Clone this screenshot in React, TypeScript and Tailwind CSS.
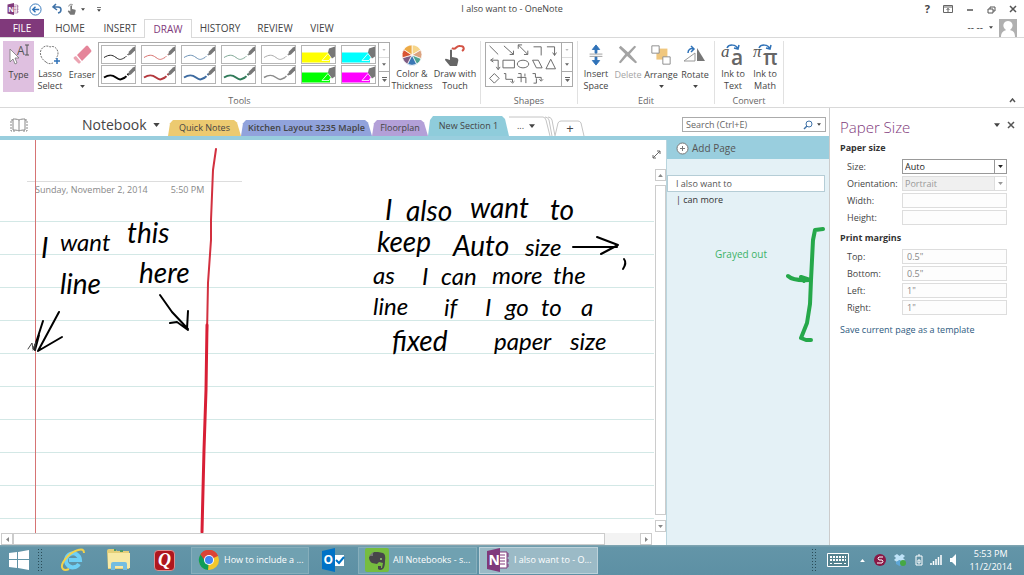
import type { ReactNode } from 'react';

interface RibbonButtonProps {
  icon: ReactNode;
  lines: string[];
  width: string;
  active?: boolean;
  disabled?: boolean;
  menu?: boolean;
}

const RibbonButton = ({ icon, lines, width, active, disabled, menu }: RibbonButtonProps) => (
  <button
    disabled={disabled}
    className={`flex h-[51px] shrink-0 flex-col items-center ${width} ${active ? 'bg-[#dfc0e0]' : ''} ${disabled ? 'text-[#a5a5a5]' : 'text-[#444]'}`}
  >
    <span className="flex h-7 items-center justify-center">{icon}</span>
    {lines.map((line) => (
      <span key={line} className="whitespace-nowrap leading-[12px]">{line}</span>
    ))}
    {menu && <Caret className="mt-1 h-[3px] w-[5px]" />}
  </button>
);

const Caret = ({ className }: { className: string }) => (
  <svg viewBox="0 0 8 5" className={`shrink-0 ${className}`} fill="currentColor">
    <path d="M0 0h8L4 5z" />
  </svg>
);

const RibbonGroup = ({ label, className, children }: { label: string; className: string; children: ReactNode }) => (
  <div className={`my-[3px] flex shrink-0 flex-col border-r border-[#e1e1e1] ${className}`}>
    <div className="flex h-[53px] shrink-0">{children}</div>
    <div className="flex-1 text-center leading-[14px] text-[#666]">{label}</div>
  </div>
);

const GalleryScroll = () => (
  <div className="flex w-[11px] shrink-0 flex-col border-l border-[#ababab] text-[#666]">
    <button aria-label="Scroll up" className="flex flex-1 items-center justify-center text-[#bbb]">
      <Caret className="h-[2px] w-[4px]" />
    </button>
    <button aria-label="Scroll down" className="flex flex-1 items-center justify-center border-t border-[#ddd]">
      <Caret className="h-[3px] w-[4px]" />
    </button>
    <button aria-label="More" className="flex flex-1 flex-col items-center justify-center gap-px border-t border-[#ababab]">
      <span className="h-px w-[5px] bg-[#666]" />
      <Caret className="h-[3px] w-[5px]" />
    </button>
  </div>
);

const PENS = [
  { name: 'Black', color: '#222', width: 1 },
  { name: 'Red', color: '#d8726f', width: 1 },
  { name: 'Blue', color: '#6d92b5', width: 1 },
  { name: 'Green', color: '#7fa795', width: 1 },
  { name: 'Gray', color: '#aaa', width: 1 },
  { name: 'Yellow highlighter', color: '#ffff00', width: 0 },
  { name: 'Cyan highlighter', color: '#00ffff', width: 0 },
  { name: 'Thick black', color: '#000', width: 2 },
  { name: 'Thick red', color: '#b3373c', width: 2 },
  { name: 'Thick blue', color: '#3c6aa0', width: 2 },
  { name: 'Thick green', color: '#2f7a58', width: 2 },
  { name: 'Thick gray', color: '#8a8a8a', width: 1.5 },
  { name: 'Green highlighter', color: '#00ff00', width: 0 },
  { name: 'Magenta highlighter', color: '#ff00ff', width: 0 },
];

const PenPreview = ({ color, width }: { color: string; width: number }) => (
  <svg viewBox="0 0 33 16" className="h-full w-full">
    {width > 0 ? (
      <>
        <path d="M2 11C7 8 10 8 14 11S19 13 23 11" fill="none" stroke={color} strokeWidth={width} />
        <path d="M23 11L28 6" stroke={color} strokeWidth={width} strokeDasharray="2 1.500" />
        <path d="M26 9l1-4 4-4 2-1v4l-4 4z" fill="#777" />
      </>
    ) : (
      <>
        <path d="M0 6h28v10H0z" fill={color} />
        <path d="M20 14l6-7 3 4-2 3z" fill={color} stroke="#fff" strokeWidth=".8" />
        <path d="M26 6l1-4 6-2v10l-3 2z" fill="#777" />
      </>
    )}
  </svg>
);

const ShapesPreview = () => (
  <svg viewBox="0 0 77 45" className="h-[43px] w-[76px]" fill="none" stroke="#666" strokeWidth="1">
    <path d="M3 3l9 9M18 3l10 9m0-4v4h-4M33 2l10 10m-10-6V2h4m2 10h4V8M49 4h8v9M63 4h8v9m-2-3l2 3 2-3" />
    <path d="M5 18h7v9m-2-2l2 3 2-3M7 16l-3 2 3 2M17 18h12v8H17zM48 18h6l4 8h-6zM67 17l5 10H62z" />
    <ellipse cx="38" cy="22" rx="6" ry="4" />
    <path d="M8 32l5 5-5 5-5-5zM18 32h2v6h7v3m-2-1l2 2 2-2M33 32h3v9m-4-5h9v6m-1-10v3M48 32h3v4h6v3m-8 3h3v-5m3 1l2 2 2-2" />
  </svg>
);

const TypeIcon = () => (
  <svg viewBox="0 0 22 24" className="h-6 w-[22px]">
    <text x="9" y="12" fontSize="12" fill="#555">A</text>
    <path d="M17 2h4M17 12h4M19 2v10" stroke="#555" fill="none" />
    <path d="M2 6v13l3-3 2 5 2-1-2-5h4z" fill="#fff" stroke="#777" strokeWidth=".8" />
  </svg>
);

const LassoIcon = () => (
  <svg viewBox="0 0 24 24" className="h-6 w-6" fill="none">
    <path d="M8 19C4 17 1 11 3 7s6-5 9-3c4-2 8 2 8 6s-2 4-2 6" stroke="#777" strokeDasharray="2 1" />
    <path d="M8 19c2 2 4 2 7 1" stroke="#777" strokeDasharray="2 1" />
    <path d="M19 15v6M16 18h6" stroke="#2f72b8" strokeWidth="1.500" />
  </svg>
);

const EraserIcon = () => (
  <svg viewBox="0 0 24 24" className="h-6 w-6">
    <path d="M7 12L16 3q1-1 2 0l3 4q1 1 0 2l-9 9z" fill="#e5859a" />
    <path d="M6 13l5 6-1 1q-1 1-2 0l-4-4q-1-1 0-2z" fill="#eba4b2" />
  </svg>
);

const ColorWheel = () => (
  <svg viewBox="-12 -12 24 24" className="h-[22px] w-[22px]" stroke="#fff" strokeWidth=".8">
    <path d="M0 0V-11A11 11 0 0 1 9.500-5.500z" fill="#f6d58a" />
    <path d="M0 0L9.500-5.500A11 11 0 0 1 10 4z" fill="#dba27e" />
    <path d="M0 0L10 4A11 11 0 0 1 5 10z" fill="#4fa391" />
    <path d="M0 0L5 10A11 11 0 0 1-5 10z" fill="#3b78b5" />
    <path d="M0 0L-5 10A11 11 0 0 1-10.500 3z" fill="#7e5c83" />
    <path d="M0 0L-10.500 3A11 11 0 0 1-9-6z" fill="#d95433" />
    <path d="M0 0L-9-6A11 11 0 0 1 0-11z" fill="#edaa45" />
  </svg>
);

const TouchIcon = () => (
  <svg viewBox="0 0 24 24" className="h-6 w-6">
    <path d="M9 5c4 3 4-3 8-2 4 0 5 3 2 5" fill="none" stroke="#d35244" strokeWidth="2" />
    <path d="M7 7q1.500-1 2 0v7l5 1q2 1 1 4l-1 4H7l-5-6q0-2 2-1l3 1z" fill="#666" />
  </svg>
);

const InsertSpaceIcon = () => (
  <svg viewBox="0 0 20 24" className="h-[22px] w-5">
    <path d="M10 1l4 5h-3v4H9V6H6zM10 23l4-5h-3v-4H9v4H6z" fill="#2f72b8" stroke="#2f72b8" />
    <path d="M3 11h14M3 13.500h14" stroke="#999" />
  </svg>
);

const DeleteIcon = () => (
  <svg viewBox="0 0 24 24" className="h-[22px] w-6">
    <path d="M2 4l2-2 8 7 7-7 2 1-7 8 8 9-2 1-9-8-7 8-2-1 7-9z" fill="#a3a3a3" />
  </svg>
);

const ArrangeIcon = () => (
  <svg viewBox="0 0 24 24" className="h-[22px] w-[22px]" fill="#fff" stroke="#888">
    <path d="M7 5h12v12H7z" fill="#f0c77e" stroke="none" />
    <path d="M2 2h8v8H2zM14 14h8v8h-8z" />
  </svg>
);

const RotateIcon = () => (
  <svg viewBox="0 0 24 24" className="h-6 w-6">
    <path d="M14 5v13h8z" fill="#777" />
    <path d="M12 10v8H1z" fill="#fff" stroke="#999" />
    <path d="M5 10c0-4 3-5 6-4M8 3l3 3-3 3" fill="none" stroke="#2f72b8" strokeWidth="1.500" />
  </svg>
);

const ConvertIcon = ({ glyph }: { glyph: string }) => (
  <svg viewBox="0 0 26 26" className="h-[26px] w-[26px]">
    <path d="M7 6c2-4 9-4 11 1m1-4l-1 4-4-1" fill="none" stroke="#2f72b8" strokeWidth="1.500" />
    <text x="1" y="15" fontSize="17" fontStyle="italic" fontFamily="Liberation Serif" fill="#555">{glyph}</text>
    <text x="11" y="23" fontSize="21" fontWeight="600" fill="#666">{glyph}</text>
  </svg>
);

const OneNoteIcon = ({ className }: { className: string }) => (
  <svg viewBox="0 0 24 24" className={`shrink-0 ${className}`}>
    <path d="M12 4h9v16h-9z" fill="#fff" stroke="#80397b" />
    <path d="M14 7h5M14 10h5M14 13h5M14 16h5M22 5v4M22 11v3M22 16v3" stroke="#80397b" />
    <path d="M1 3l13-3v24L1 21z" fill="#80397b" />
    <text x="2.500" y="17" fontSize="14" fontWeight="700" fill="#fff">N</text>
  </svg>
);

const TitleBar = () => (
  <header className="flex h-[18px] items-center text-[#444]">
    <div className="flex flex-1 items-center pl-[7px]">
      <OneNoteIcon className="h-3 w-3" />
      <button aria-label="Back" className="ml-[10px]">
        <svg viewBox="0 0 14 14" className="h-[13px] w-[13px]" fill="none" stroke="#2f72b8">
          <circle cx="7" cy="7" r="6" />
          <path d="M11 7H4m3-3L4 7l3 3" strokeWidth="1.500" />
        </svg>
      </button>
      <button aria-label="Undo" className="ml-[9px]">
        <svg viewBox="0 0 12 12" className="h-3 w-3" fill="none" stroke="#3f72a8" strokeWidth="1.500">
          <path d="M5 1L2 4l4 3M2 4h5c4 0 4 5 0 6" />
        </svg>
      </button>
      <button aria-label="Touch mode" className="ml-1 flex items-center gap-1">
        <svg viewBox="0 0 12 14" className="h-3 w-[10px]" fill="#777">
          <path d="M4 3q1-1 2 0v4l4 1q1 1 0 3l-1 3H4L1 10q0-2 2-1l1 1z" />
          <path d="M2 4q1-4 5-2" fill="none" stroke="#777" />
        </svg>
        <Caret className="h-[3px] w-1" />
      </button>
      <button aria-label="Customize toolbar" className="ml-3 flex flex-col items-center gap-px">
        <span className="h-px w-1 bg-[#777]" />
        <Caret className="h-[3px] w-1" />
      </button>
    </div>
    <h1>I also want to - OneNote</h1>
    <div className="flex flex-1 items-center justify-end gap-[13px] pr-[7px]">
      <button aria-label="Help" className="text-[11px] font-bold">?</button>
      <button aria-label="Ribbon display options">
        <svg viewBox="0 0 10 8" className="h-2 w-[10px]" fill="none" stroke="#666"><path d="M.5.5h9v7h-9zM.5 2h9M5 7V3M3.500 5L5 3.500 6.500 5" /></svg>
      </button>
      <button aria-label="Minimize">
        <svg viewBox="0 0 8 8" className="h-2 w-2" stroke="#555" strokeWidth="1.500"><path d="M1 5h6" /></svg>
      </button>
      <button aria-label="Restore">
        <svg viewBox="0 0 9 9" className="h-[9px] w-[9px]" fill="none" stroke="#555"><path d="M1 4h5v4H1zM3 4V2h5v4H6" /></svg>
      </button>
      <button aria-label="Close">
        <svg viewBox="0 0 8 8" className="h-2 w-2" stroke="#555" strokeWidth="1.500"><path d="M1 1l6 6M7 1L1 7" /></svg>
      </button>
    </div>
  </header>
);

const MENU_TABS = [
  { label: 'HOME', width: 'w-[52px]' },
  { label: 'INSERT', width: 'w-[48px]' },
  { label: 'DRAW', width: 'w-[48px]' },
  { label: 'HISTORY', width: 'w-[56px]' },
  { label: 'REVIEW', width: 'w-[54px]' },
  { label: 'VIEW', width: 'w-[40px]' },
];

const MenuTabs = () => (
  <nav className="flex h-5 border-b border-[#d9d9d9] text-[10px] text-[#444]">
    <button className="mt-px w-11 bg-[#80397b] text-white">FILE</button>
    {MENU_TABS.map(({ label, width }) => (
      <button
        key={label}
        className={`mt-px ${width} ${label === 'DRAW' ? '-mb-px border border-b-0 border-[#d9d9d9] bg-white text-[#80397b]' : ''}`}
      >
        {label}
      </button>
    ))}
    <button className="ml-auto mr-[7px] flex items-center gap-[6px]">
      <span>-- --</span>
      <Caret className="h-[3px] w-1" />
      <svg viewBox="0 0 18 18" className="h-[18px] w-[18px]">
        <path d="M0 0h18v18H0z" fill="#b0b0b0" />
        <path d="M2 18c0-5 3-6 5-7-5-4-2-9 2-9s7 5 2 9c3 1 5 2 5 7z" fill="#fff" />
      </svg>
    </button>
  </nav>
);

const Ribbon = () => (
  <div className="flex h-[70px] border-b border-[#d9d9d9]">
    <RibbonGroup label="Tools" className="pl-[3px] pr-1">
      <RibbonButton icon={<TypeIcon />} lines={['Type']} width="w-[31px]" active />
      <RibbonButton icon={<LassoIcon />} lines={['Lasso', 'Select']} width="w-8" />
      <RibbonButton icon={<EraserIcon />} lines={['Eraser']} width="w-8" menu />
      <div className="mt-px flex h-[45px] w-[292px] border border-[#ababab]">
        <div className="grid flex-1 grid-cols-7 content-evenly gap-x-[5px] px-[2px]">
          {PENS.map((pen) => (
            <button key={pen.name} aria-label={pen.name} className="h-[19px] border border-[#b5b5b5]">
              <PenPreview color={pen.color} width={pen.width} />
            </button>
          ))}
        </div>
        <GalleryScroll />
      </div>
      <RibbonButton icon={<ColorWheel />} lines={['Color &', 'Thickness']} width="w-11" />
      <RibbonButton icon={<TouchIcon />} lines={['Draw with', 'Touch']} width="w-[42px]" />
    </RibbonGroup>
    <RibbonGroup label="Shapes" className="px-1">
      <div className="mt-px flex h-[45px] w-[88px] border border-[#ababab]">
        <ShapesPreview />
        <GalleryScroll />
      </div>
    </RibbonGroup>
    <RibbonGroup label="Edit" className="px-[2px]">
      <RibbonButton icon={<InsertSpaceIcon />} lines={['Insert', 'Space']} width="w-8" />
      <RibbonButton icon={<DeleteIcon />} lines={['Delete']} width="w-8" disabled />
      <RibbonButton icon={<ArrangeIcon />} lines={['Arrange']} width="w-[34px]" menu />
      <RibbonButton icon={<RotateIcon />} lines={['Rotate']} width="w-[34px]" menu />
    </RibbonGroup>
    <RibbonGroup label="Convert" className="px-[2px]">
      <RibbonButton icon={<ConvertIcon glyph="a" />} lines={['Ink to', 'Text']} width="w-8" />
      <RibbonButton icon={<ConvertIcon glyph="π" />} lines={['Ink to', 'Math']} width="w-8" />
    </RibbonGroup>
    <button aria-label="Collapse the ribbon" className="mb-1 ml-auto mr-2 self-end">
      <svg viewBox="0 0 7 5" className="h-[5px] w-[7px]" fill="none" stroke="#555" strokeWidth="1.500"><path d="M1 4l2.500-3L6 4" /></svg>
    </button>
  </div>
);

const SECTIONS = [
  { name: 'Quick Notes', style: 'h-4 w-[73px] bg-[#ecca70]' },
  { name: 'Kitchen Layout 3235 Maple', style: 'h-4 w-[131px] bg-[#91a3dc] font-semibold' },
  { name: 'Floorplan', style: 'h-4 w-[56px] bg-[#b3a0d8]' },
  { name: 'New Section 1', style: 'h-5 w-[81px] bg-[#8fccdb]' },
];

const SectionBar = () => (
  <div className="flex h-7 items-end text-[#444]">
    <button aria-label="Show notebooks" className="mb-1 ml-[10px]">
      <svg viewBox="0 0 18 14" className="h-[14px] w-[18px]" fill="none" stroke="#888">
        <path d="M9 2v11M9 2C7 1 5 1 3 1v11c2 0 4 0 6 1M9 2c2-1 4-1 6-1v11c-2 0-4 0-6 1" />
        <path d="M3 2H1v11h5M15 2h2v11h-5" strokeDasharray="2 1" />
      </svg>
    </button>
    <button className="ml-[54px] flex w-[86px] items-center gap-[6px] text-[14px] leading-[22px]">
      Notebook
      <Caret className="h-1 w-[7px]" />
    </button>
    {SECTIONS.map((section) => (
      <button
        key={section.name}
        className={`shrink-0 whitespace-nowrap [clip-path:polygon(0_100%,2px_20%,5px_0,calc(100%-7px)_0,calc(100%-4px)_15%,100%_100%)] ${section.style}`}
      >
        {section.name}
      </button>
    ))}
    <button aria-label="More sections" className="relative flex h-5 w-[46px] items-center gap-[5px] pl-2">
      <span>...</span>
      <Caret className="h-1 w-[6px]" />
      <svg viewBox="0 0 46 20" className="absolute inset-0 h-5 w-[46px]" fill="none" stroke="#c4c4c4">
        <path d="M0 1h34q2 0 3 3l4 16M36 1q3 0 4 3l3 16M39 1q3 0 4 3l3 16" />
      </svg>
    </button>
    <button aria-label="New section" className="relative h-4 w-[30px] text-[13px] leading-4">
      +
      <svg viewBox="0 0 30 16" className="absolute inset-0 h-4 w-[30px]" fill="none" stroke="#c4c4c4">
        <path d="M0 16l3-13q1-2 3-2h17q2 0 3 2l3 13" />
      </svg>
    </button>
    <form className="mb-1 ml-auto mr-[3px] flex h-[15px] w-36 items-center border border-[#ababab] pr-1">
      <input aria-label="Search" placeholder="Search (Ctrl+E)" className="w-0 flex-1 px-[3px] outline-none placeholder:text-[#666]" />
      <button aria-label="Search notes" type="button" className="flex items-center gap-1">
        <svg viewBox="0 0 10 10" className="h-[10px] w-[10px]" fill="none" stroke="#3f72a8"><circle cx="6" cy="4" r="3" /><path d="M4 6L1 9" strokeWidth="1.500" /></svg>
        <Caret className="h-[3px] w-1" />
      </button>
    </form>
  </div>
);

const INK_WORDS = [
  { text: 'I', x: 41, y: 258, size: 'text-[28px]' },
  { text: 'want', x: 60, y: 251, size: 'text-[24px]' },
  { text: 'this', x: 127, y: 243, size: 'text-[28px]' },
  { text: 'line', x: 60, y: 294, size: 'text-[28px]' },
  { text: 'here', x: 139, y: 283, size: 'text-[28px]' },
  { text: 'I', x: 385, y: 220, size: 'text-[28px]' },
  { text: 'also', x: 406, y: 221, size: 'text-[28px]' },
  { text: 'want', x: 470, y: 218, size: 'text-[28px]' },
  { text: 'to', x: 550, y: 220, size: 'text-[28px]' },
  { text: 'keep', x: 377, y: 252, size: 'text-[28px]' },
  { text: 'Auto', x: 453, y: 256, size: 'text-[28px]' },
  { text: 'size', x: 525, y: 256, size: 'text-[24px]' },
  { text: 'as', x: 373, y: 284, size: 'text-[24px]' },
  { text: 'I', x: 422, y: 285, size: 'text-[24px]' },
  { text: 'can', x: 441, y: 285, size: 'text-[24px]' },
  { text: 'more', x: 492, y: 284, size: 'text-[24px]' },
  { text: 'the', x: 553, y: 284, size: 'text-[24px]' },
  { text: 'line', x: 373, y: 315, size: 'text-[24px]' },
  { text: 'if', x: 444, y: 316, size: 'text-[24px]' },
  { text: 'I', x: 485, y: 316, size: 'text-[24px]' },
  { text: 'go', x: 505, y: 316, size: 'text-[24px]' },
  { text: 'to', x: 541, y: 316, size: 'text-[24px]' },
  { text: 'a', x: 581, y: 316, size: 'text-[24px]' },
  { text: 'fixed', x: 392, y: 351, size: 'text-[28px]' },
  { text: 'paper', x: 494, y: 350, size: 'text-[24px]' },
  { text: 'size', x: 570, y: 350, size: 'text-[24px]' },
];

const InkLayer = () => (
  <svg viewBox="0 140 654 393" className="absolute left-0 top-0 h-[393px] w-[654px]" fill="none" strokeLinecap="round" strokeLinejoin="round">
    <path d="M35.500 140V533" stroke="#d67474" />
    <path d="M216 149l-3 21-2 50v20l-3 43-1 50" stroke="#d2303f" strokeWidth="2" />
    <path d="M207 325l-1 65-2 60-1 40-1 42" stroke="#d81f35" strokeWidth="3" />
    {INK_WORDS.map((word) => (
      <text
        key={`${word.x}-${word.y}`}
        x={word.x}
        y={word.y}
        className={`fill-black font-['Lato'] italic ${word.size}`}
      >
        {word.text}
      </text>
    ))}
    <g stroke="#000" strokeWidth="2">
      <path d="M59 312L38 351l24-14M43 321l-9 28M39 335l-4 15" />
      <path d="M160 295l12 17 16 17M188 311l-1 18M170 323l7-1 11 8" />
      <path d="M573 247h44M597 237l21 8-17 9" />
      <path d="M624 259q3 4-1 10" />
    </g>
    <path d="M28 349l4-6 1 6 2-5v6M36 342l-3 8" stroke="#444" />
  </svg>
);

const NoteCanvas = () => (
  <section className="relative flex min-w-0 flex-1 flex-col bg-white">
    <div className="flex flex-1">
      <div className="min-w-0 flex-1 overflow-hidden">
        <div className="ml-[27px] mt-[41px] flex w-[215px] gap-[23px] whitespace-nowrap border-t border-[#ddd] pl-2 pt-[2px] leading-[12px] text-[#888]">
          <span>Sunday, November 2, 2014</span>
          <span>5:50 PM</span>
        </div>
        <div className="mt-[25px] h-[312px] bg-[repeating-linear-gradient(#d3e8e6_0_1px,transparent_1px_33px)]" />
      </div>
      <div className="flex w-3 flex-col items-center pb-[1px]">
        <button aria-label="Full page view" className="mb-[10px] mr-2 mt-[10px]">
          <svg viewBox="0 0 9 9" className="h-[9px] w-[9px]" fill="none" stroke="#666"><path d="M1 8l7-7M5 1h3v3M1 5v3h3" /></svg>
        </button>
        <button aria-label="Scroll up" className="flex h-3 w-[11px] items-center justify-center border border-[#ccc] text-[#888]">
          <Caret className="h-[3px] w-[5px] rotate-180" />
        </button>
        <div className="mb-[5px] mt-1 w-[11px] flex-1 border border-[#ccc] bg-white" />
        <button aria-label="Scroll down" className="flex h-3 w-[11px] items-center justify-center border border-[#ccc] text-[#888]">
          <Caret className="h-[3px] w-[5px]" />
        </button>
      </div>
    </div>
    <div className="flex h-3 pl-px pr-[14px] text-[#888]">
      <button aria-label="Scroll left" className="flex w-3 items-center justify-center border border-[#ccc]">
        <Caret className="h-[3px] w-[5px] rotate-90" />
      </button>
      <div className="min-w-0 flex-1 border border-[#ccc] bg-white" />
      <div className="w-[35px] bg-[#f3f3f3]" />
      <button aria-label="Scroll right" className="flex w-3 items-center justify-center border border-[#ccc]">
        <Caret className="h-[3px] w-[5px] -rotate-90" />
      </button>
    </div>
    <InkLayer />
  </section>
);

const PageList = () => (
  <aside className="relative w-[163px] shrink-0 border-l border-[#b9d5de] bg-[#e4f1f6] text-[#555]">
    <button className="flex h-[19px] w-full items-center gap-[3px] bg-[#99cede] pb-[3px] pl-[9px] text-[10px]">
      <svg viewBox="0 0 13 13" className="h-[13px] w-[13px]" fill="#fff" stroke="#777">
        <circle cx="6.500" cy="6.500" r="5.500" />
        <path d="M6.500 4v5M4 6.500h5" />
      </svg>
      Add Page
    </button>
    <ul className="mt-4 pr-1">
      <li><button className="h-[17px] w-full border border-[#b5cdd6] bg-white pl-2 text-left">I also want to</button></li>
      <li><button className="h-4 w-full pl-[9px] text-left text-[#333]">| can more</button></li>
    </ul>
    <p className="absolute left-12 top-[107px] text-[10px] text-[#3cb267]">Grayed out</p>
    <svg viewBox="786 226 42 118" className="absolute left-[119px] top-[86px] h-[118px] w-[42px]" fill="none" stroke="#25a84a" strokeWidth="4" strokeLinecap="round" strokeLinejoin="round">
      <path d="M823 229l-8 1-2 10-1 20-1 20-1 24-3 19-6 15 5 2h5" />
      <path d="M788 276q5 5 22 4l-9-3 3 4" />
    </svg>
  </aside>
);

const PAPER_FIELDS = [
  { id: 'width', label: 'Width:', value: '' },
  { id: 'height', label: 'Height:', value: '' },
];

const MARGIN_FIELDS = [
  { id: 'top', label: 'Top:', value: '0.5"' },
  { id: 'bottom', label: 'Bottom:', value: '0.5"' },
  { id: 'left', label: 'Left:', value: '1"' },
  { id: 'right', label: 'Right:', value: '1"' },
];

const FieldRow = ({ id, label, children }: { id: string; label: string; children: ReactNode }) => (
  <div className="flex h-[17px] items-center pl-[7px]">
    <label htmlFor={id} className="w-[55px]">{label}</label>
    {children}
  </div>
);

const TextField = ({ id, label, value }: { id: string; label: string; value: string }) => (
  <FieldRow id={id} label={label}>
    <input id={id} defaultValue={value} disabled className="h-[15px] w-[105px] border border-[#ddd] bg-[#fdfdfd] pl-1 text-[#888]" />
  </FieldRow>
);

const SelectField = ({ id, label, value, disabled }: { id: string; label: string; value: string; disabled?: boolean }) => (
  <FieldRow id={id} label={label}>
    <div className={`flex h-[15px] w-[105px] border ${disabled ? 'border-[#ddd] bg-[#f0f0f0] text-[#999]' : 'border-[#999] text-[#222]'}`}>
      <select id={id} disabled={disabled} className="min-w-0 flex-1 appearance-none pl-[2px]">
        <option>{value}</option>
      </select>
      <span className={`flex w-3 items-center justify-center border-l ${disabled ? 'border-[#ddd] bg-white' : 'border-[#999]'}`}>
        <Caret className="h-[3px] w-[5px]" />
      </span>
    </div>
  </FieldRow>
);

const PaperSizePane = () => (
  <aside className="w-[195px] shrink-0 border-l border-[#ccc] pl-[10px] text-[#444]">
    <div className="flex h-[34px] items-center pr-[9px] pt-1">
      <h2 className="flex-1 text-[15px] font-light text-[#80397b]">Paper Size</h2>
      <button aria-label="Pane options" className="mb-1 mr-[7px]"><Caret className="h-1 w-[6px]" /></button>
      <button aria-label="Close pane" className="mb-1">
        <svg viewBox="0 0 8 8" className="h-2 w-2" stroke="#555" strokeWidth="1.500"><path d="M1 1l6 6M7 1L1 7" /></svg>
      </button>
    </div>
    <h3 className="mb-1 font-bold leading-[12px] text-[#333]">Paper size</h3>
    <SelectField id="size" label="Size:" value="Auto" />
    <SelectField id="orientation" label="Orientation:" value="Portrait" disabled />
    {PAPER_FIELDS.map((field) => (
      <TextField key={field.id} {...field} />
    ))}
    <h3 className="mb-1 mt-[6px] font-bold leading-[12px] text-[#333]">Print margins</h3>
    {MARGIN_FIELDS.map((field) => (
      <TextField key={field.id} {...field} />
    ))}
    <a href="#template" className="mt-2 block leading-[12px] text-[#2d5a80]">Save current page as a template</a>
  </aside>
);

const Grip = () => (
  <span className="h-6 w-[7px] shrink-0 bg-[radial-gradient(#1c3a43_1px,transparent_1px)] bg-[length:3px_3px] opacity-80" />
);

const Taskbar = () => (
  <footer className="flex h-[30px] items-center bg-[linear-gradient(#7ea4b1_0_1px,#6395a8_2px,#5d90a4)] text-white">
    <button aria-label="Start" className="ml-2">
      <svg viewBox="0 0 21 20" className="h-5 w-[21px]" fill="#fff"><path d="M1 3l8-1v7H1zM10 2l11-2v9H10zM1 10h8v8l-8-1zM10 10h11v10l-11-2z" /></svg>
    </button>
    <span className="ml-2 flex"><Grip /></span>
    <button aria-label="Internet Explorer" className="ml-4">
      <svg viewBox="0 0 26 26" className="h-[26px] w-[26px]">
        <path d="M19 17A7 7 0 1 1 20 13H9" fill="none" stroke="#6fd0f5" strokeWidth="4" />
        <path d="M3 22C-1 18 8 6 18 3q6-2 6 3M3 22q2 2 6 0" fill="none" stroke="#f2d24c" strokeWidth="2" />
      </svg>
    </button>
    <button aria-label="File Explorer" className="ml-5">
      <svg viewBox="0 0 26 24" className="h-6 w-[26px]">
        <path d="M1 3q0-2 2-2h6l2 2h12v18H2z" fill="#e5cf78" />
        <path d="M2 5h22v15H2z" fill="#f8e9a5" />
        <path d="M5 22v-6q0-2 2-2h12q2 0 2 2v6h-4v-4H9v4z" fill="#74bde0" />
        <path d="M8 2h2M14 3h3" stroke="#4c9965" strokeWidth="2" />
      </svg>
    </button>
    <button aria-label="Quicken" className="ml-[22px] h-[21px] w-[21px] rounded-sm border border-[#dc8f90] bg-[#af161d] font-['Liberation_Serif'] text-[18px] font-bold italic leading-[18px]">
      Q
    </button>
    <button className="ml-4 flex h-[27px] w-[118px] items-center gap-1 border border-[#86aebb] bg-[#70a1b1] pl-[6px]">
      <svg viewBox="0 0 22 22" className="h-[22px] w-[22px] shrink-0">
        <circle cx="11" cy="11" r="10" fill="#f2c72c" />
        <path d="M11 11L2.500 5.500A10 10 0 0 1 20 7z" fill="#db4437" />
        <path d="M11 11L2.500 5.500A10 10 0 0 0 10 21z" fill="#0f9d58" />
        <path d="M11 7h9A10 10 0 0 0 2.500 5.500L7 12z" fill="#db4437" />
        <circle cx="11" cy="11" r="5" fill="#fff" />
        <circle cx="11" cy="11" r="4" fill="#4285f4" />
      </svg>
      How to include a ...
    </button>
    <button aria-label="Outlook" className="ml-3">
      <svg viewBox="0 0 24 24" className="h-6 w-6">
        <path d="M12 7h11v11H12z" fill="#fff" />
        <path d="M15 12l3 3 5-6" fill="none" stroke="#0072c6" strokeWidth="2" />
        <path d="M1 3l13-3v24L1 21z" fill="#0072c6" />
        <text x="2.500" y="16" fontSize="12" fontWeight="700" fill="#fff">O</text>
      </svg>
    </button>
    <button className="ml-[13px] flex h-[27px] w-[119px] items-center gap-1 border border-[#86aebb] bg-[#70a1b1] pl-[6px]">
      <svg viewBox="0 0 24 24" className="h-6 w-6 shrink-0">
        <rect width="24" height="24" rx="2" fill="#76bd3f" />
        <path d="M4 9l5-5h4l5 1q3 1 2 8 0 6-2 8-3 2-5 0v-3h3v2h1l1-5-4-1-2 2-5-1q-3-2-3-6z" fill="#47464a" />
        <path d="M4 8l4-4v4z" fill="#777" />
        <circle cx="16" cy="11" r="1" fill="#9acb78" />
      </svg>
      All Notebooks - s...
    </button>
    <button className="ml-[2px] flex h-[27px] w-[119px] items-center gap-1 border border-[#bdd2da] bg-[#9bbac6] pl-[6px]">
      <OneNoteIcon className="h-6 w-6" />
      I also want to - O...
    </button>
    <div className="ml-auto flex items-center pr-3">
      <Grip />
      <button aria-label="Touch keyboard" className="ml-[9px]">
        <svg viewBox="0 0 22 14" className="h-[14px] w-[22px]" fill="none" stroke="#fff">
          <path d="M.5.5h21v13H.5z" fill="#55828f" />
          <path d="M3 4h16M3 7h16" strokeWidth="2" strokeDasharray="2 1" />
          <path d="M3 10.500h2M7 10.500h8M17 10.500h2" />
        </svg>
      </button>
      <button aria-label="Show hidden icons" className="ml-[11px]"><Caret className="h-[3px] w-[5px] rotate-180" /></button>
      <svg viewBox="0 0 12 12" className="ml-[9px] h-3 w-3">
        <circle cx="6" cy="6" r="6" fill="#8a1846" />
        <path d="M9 3H5q-2 1 0 3h3q2 1 0 3H3" fill="none" stroke="#fff" />
      </svg>
      <svg viewBox="0 0 13 12" className="ml-[7px] h-3 w-[13px]">
        <path d="M4 0l2.500 2L9 0l3 2-2 2 2 2-3 2-2.500-2L4 8 1 6l2-2-2-2z" fill="#bfe3f8" />
        <path d="M3 8l3.500-2L10 8v2l-3.500 2L3 10z" fill="#5ea7d8" />
        <circle cx="10" cy="9" r="3" fill="#46a843" />
      </svg>
      <svg viewBox="0 0 8 12" className="ml-[9px] h-3 w-2" fill="none" stroke="#fff"><path d="M1 2h6v9H1zM3 1h2M3 6h2v3H3z" /></svg>
      <svg viewBox="0 0 12 10" className="ml-[7px] h-[10px] w-3" stroke="#fff" strokeWidth="1.500"><path d="M1 8v2M3.500 6v4M6 4v6M8.500 2v8M11 0v10" /></svg>
      <svg viewBox="0 0 7 12" className="ml-2 h-3 w-[7px]" fill="#fff"><path d="M0 4h2l4-4v12L2 8H0z" /></svg>
      <time className="ml-3 text-center leading-[13px]">5:53 PM<br />11/2/2014</time>
    </div>
  </footer>
);

const App = () => (
  <div className="flex min-h-screen flex-col bg-white font-['Open_Sans',sans-serif] text-[9px]">
    <TitleBar />
    <MenuTabs />
    <Ribbon />
    <main className="flex flex-1">
      <div className="flex min-w-0 flex-1 flex-col">
        <SectionBar />
        <div className="h-1 bg-[#99cede]" />
        <div className="flex flex-1">
          <NoteCanvas />
          <PageList />
        </div>
      </div>
      <PaperSizePane />
    </main>
    <Taskbar />
  </div>
);

export default App;
